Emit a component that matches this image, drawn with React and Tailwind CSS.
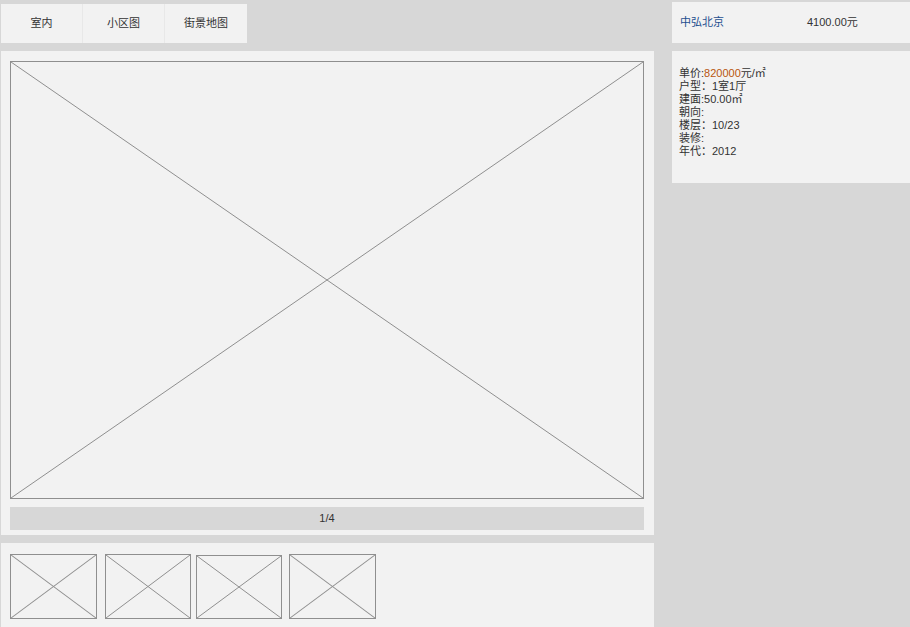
import React from "react";

const XBox = ({ className }) => (
  <div className={`border border-[#8f8f8f] box-border ${className}`}>
    <svg className="block w-full h-full" viewBox="0 0 100 100" preserveAspectRatio="none">
      <line x1="0" y1="0" x2="100" y2="100" stroke="#8f8f8f" strokeWidth="1" vectorEffect="non-scaling-stroke" />
      <line x1="100" y1="0" x2="0" y2="100" stroke="#8f8f8f" strokeWidth="1" vectorEffect="non-scaling-stroke" />
    </svg>
  </div>
);

export default function App() {
  const details = [
    ["单价:", <><span className="text-[#b8560f]">820000</span>元/㎡</>],
    ["户型：", "1室1厅"],
    ["建面:", "50.00㎡"],
    ["朝向:", ""],
    ["楼层：", "10/23"],
    ["装修:", ""],
    ["年代：", "2012"],
  ];
  return (
    <div
      className="w-[910px] h-[627px] overflow-hidden bg-[#d7d7d7] flex text-[#333] text-[11px]"
      style={{ fontFamily: '"Liberation Sans", "Noto Sans CJK SC", sans-serif' }}
    >
      {/* Left column */}
      <div className="w-[654px] pl-[1px] pt-[4px] flex flex-col">
        <div className="flex w-[246px] h-[39px] bg-[#f2f2f2]">
          <div className="w-[82px] flex items-center justify-center border-r border-[#e8e8e8]">室内</div>
          <div className="w-[82px] flex items-center justify-center border-r border-[#e8e8e8]">小区图</div>
          <div className="w-[82px] flex items-center justify-center">街景地图</div>
        </div>
        <div className="mt-[8px] h-[484px] bg-[#f2f2f2] pl-[9px] pt-[10px] pr-[10px] flex flex-col">
          <XBox className="w-[634px] h-[438px]" />
          <div className="mt-[8px] h-[23px] bg-[#d7d7d7] flex items-center justify-center">1/4</div>
        </div>
        <div className="mt-[8px] h-[84px] bg-[#f2f2f2] pl-[9px] pt-[11px] flex items-start">
          <XBox className="w-[87px] h-[65px]" />
          <XBox className="ml-[8px] w-[86px] h-[65px]" />
          <XBox className="ml-[5px] mt-[1px] w-[86px] h-[64px]" />
          <XBox className="ml-[7px] w-[87px] h-[65px]" />
        </div>
      </div>

      {/* Right column */}
      <div className="ml-[18px] flex-1 pt-[2px] flex flex-col">
        <div className="h-[41px] bg-[#f2f2f2] flex items-center pl-[8px]">
          <div className="w-[127px] text-[#1f4f8f]">中弘北京</div>
          <div>4100.00元</div>
        </div>
        <div className="mt-[8px] h-[132px] bg-[#f2f2f2] pl-[7px] pt-[16px] leading-[13px]">
          {details.map(([k, v], i) => (
            <div key={i} className="whitespace-nowrap">
              {k}
              {v}
            </div>
          ))}
        </div>
      </div>
    </div>
  );
}
